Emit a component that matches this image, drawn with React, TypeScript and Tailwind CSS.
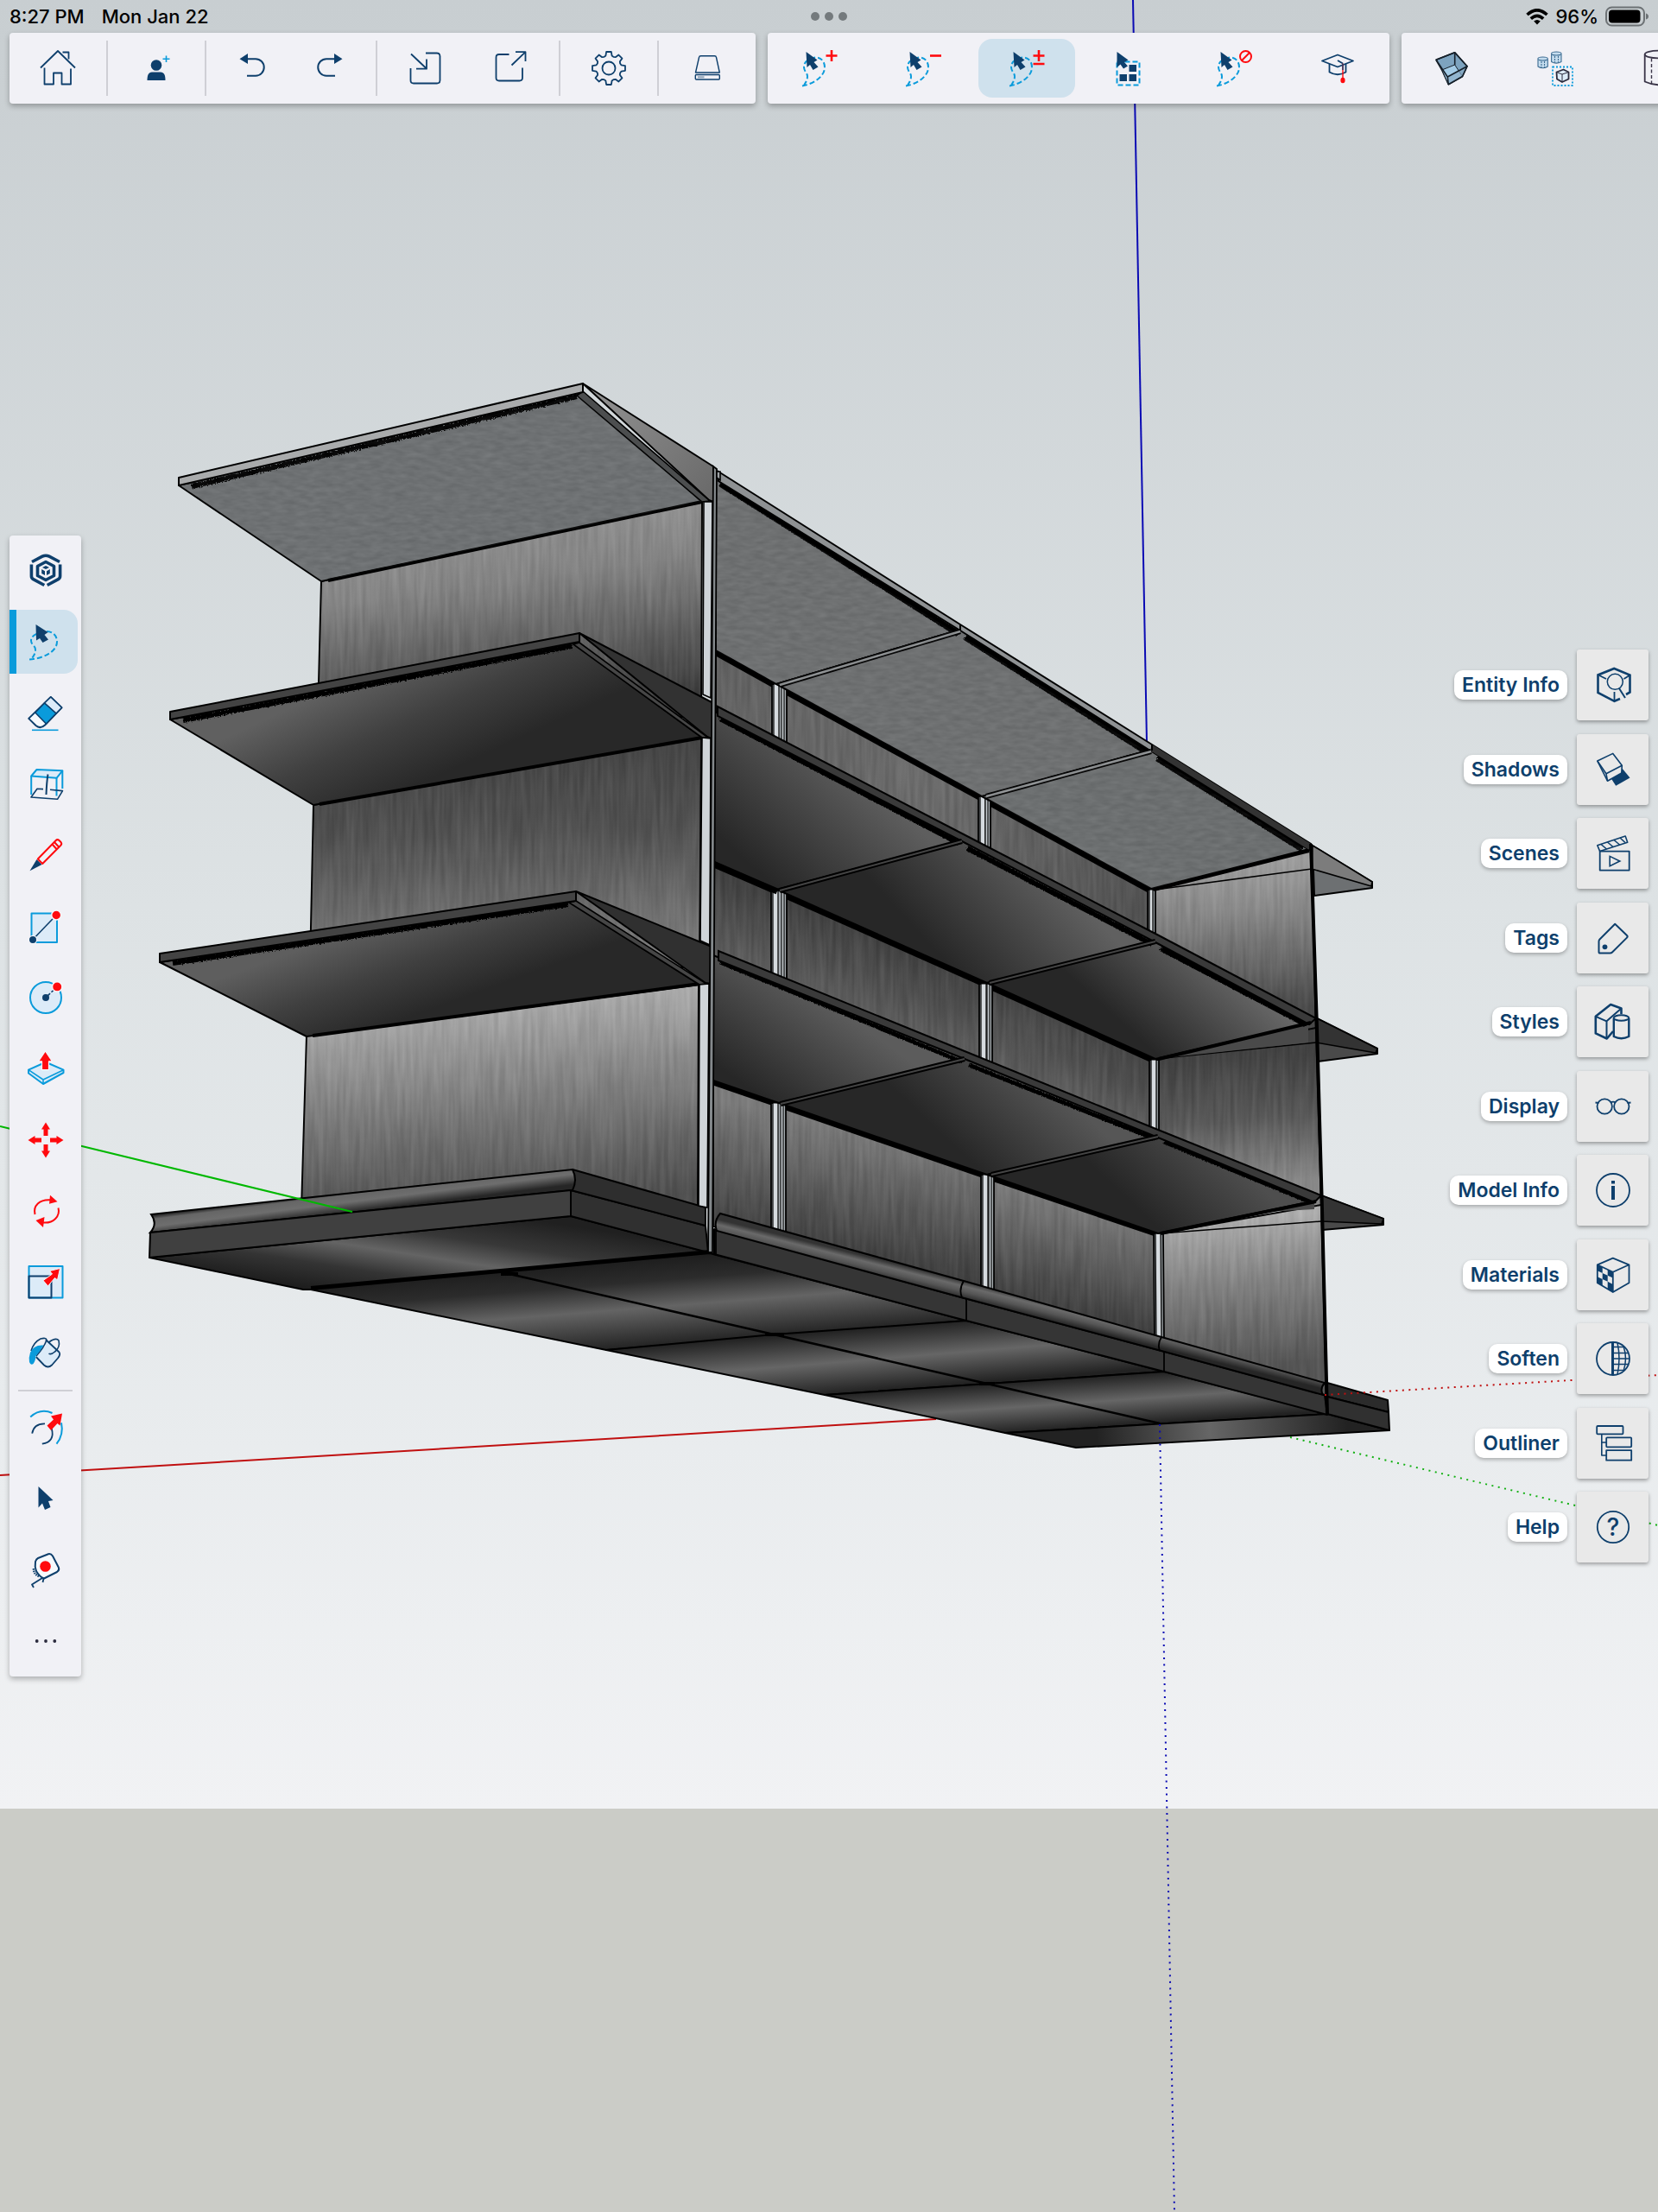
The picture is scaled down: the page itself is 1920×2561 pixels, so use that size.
import type { ReactNode } from "react";

const NAVY = "#0e3f6c";
const BLUE = "#0a9bdb";
const RED = "#ff0a0e";
const PALE = "#dcebf8";

/* ---------- icon helpers ---------- */

function Icon({ children }: { children: ReactNode }) {
  return (
    <svg
      viewBox="0 0 44 44"
      className="size-11 shrink-0 overflow-visible"
      fill="none"
      stroke={NAVY}
      strokeWidth={1.6}
      strokeLinejoin="round"
      strokeLinecap="butt"
      aria-hidden="true"
    >
      {children}
    </svg>
  );
}

/* Narrow loop used by the selection modes in the top bar. */
function LassoLoop() {
  return (
    <>
      <path
        d="M2 42.500 C14 40.500 28 32 28 21 C28 12 21 8 15 10 C8 12 4 15 4 20.500 C4 26 8 27 8 31.500 C8 36 6 38 4 42"
        stroke={BLUE}
        strokeWidth={2}
        strokeDasharray="6 3"
      />
      <path d="M6.500 3 L19.500 12.500 L15.500 15 L20.500 20.500 L14.500 24 L11 18 L7.500 21 Z" fill={NAVY} stroke="none" />
    </>
  );
}

function gearPath() {
  const pts: string[] = [];
  const teeth = 8;
  for (let i = 0; i < teeth; i++) {
    const base = (i / teeth) * Math.PI * 2 - Math.PI / 2;
    const add = (r: number, a: number) =>
      pts.push(`${(22 + r * Math.cos(base + a)).toFixed(2)} ${(22 + r * Math.sin(base + a)).toFixed(2)}`);
    add(15, -0.24);
    add(19.2, -0.15);
    add(19.2, 0.15);
    add(15, 0.24);
    add(14.2, 0.393);
  }
  return `M${pts.join(" L")} Z`;
}

const HomeIcon = () => (
  <Icon>
    <path d="M2 21.500 L22 2 L42 21.500 M27.500 3.500 H34.500 V11.500" strokeWidth={1.8} />
    <path d="M6.500 21.500 V40.500 H17 V27.500 H26.500 V40.500 H37 V22.500" strokeWidth={1.8} />
  </Icon>
);
const UserIcon = () => (
  <Icon>
    <circle cx="22" cy="18.500" r="6.300" fill={NAVY} stroke="none" />
    <path d="M11.500 36 C11.500 30 13 26.500 17 26.500 H27 C31 26.500 32.500 30 32.500 36 Z" fill={NAVY} stroke="none" />
    <path d="M33.500 7.500 V15 M29.500 11.200 H37.500" stroke={BLUE} strokeWidth={1.6} />
  </Icon>
);
const UndoIcon = () => (
  <Icon>
    <path d="M7.500 11.200 L17 5 V17 Z" fill={NAVY} stroke="none" />
    <path d="M16 11.200 H26 A9.700 9.700 0 0 1 26 30.700 H16" strokeWidth={2} />
  </Icon>
);
const RedoIcon = () => (
  <Icon>
    <path d="M36.500 11.200 L27 5 V17 Z" fill={NAVY} stroke="none" />
    <path d="M28 11.200 H18 A9.700 9.700 0 0 0 18 30.700 H28" strokeWidth={2} />
  </Icon>
);
const ImportIcon = () => (
  <Icon>
    <path d="M23 4.500 H36 Q39.500 4.500 39.500 8 V36 Q39.500 39.500 36 39.500 H9 Q5.500 39.500 5.500 36 V22" strokeWidth={1.8} />
    <path d="M6 5.500 L24 22.500 M12 22.700 H24 V11.500" strokeWidth={1.8} />
  </Icon>
);
const ExportIcon = () => (
  <Icon>
    <path d="M19.500 6 H8 Q4.500 6 4.500 9.500 V33 Q4.500 36.500 8 36.500 H31.500 Q35 36.500 35 33 V21.500" strokeWidth={1.8} />
    <path d="M22.500 18.500 L38.500 3.200 M27 3.200 H38.500 V14" strokeWidth={1.8} />
  </Icon>
);
const GearIcon = () => (
  <Icon>
    <path d={gearPath()} strokeWidth={1.8} />
    <circle cx="22" cy="22" r="7.500" strokeWidth={1.8} />
  </Icon>
);
const DriveIcon = () => (
  <Icon>
    <path d="M12.500 9.500 Q12.800 7.800 14.500 7.800 H30.500 Q32.200 7.800 32.500 9.500 L36.300 27 H8.500 Z" strokeWidth={1.4} />
    <rect x="8.300" y="29.500" width="28" height="5.500" rx="1" strokeWidth={1.4} />
    <path d="M11 32.300 H18.500" strokeWidth={2} stroke="#8fa3b8" />
  </Icon>
);

const LassoAddIcon = () => (
  <Icon>
    <LassoLoop />
    <path d="M36 1 V14 M29.500 7.500 H42.500" stroke={RED} strokeWidth={2.600} />
  </Icon>
);
const LassoSubtractIcon = () => (
  <Icon>
    <LassoLoop />
    <path d="M30 7.500 H43" stroke={RED} strokeWidth={2.600} />
  </Icon>
);
const LassoToggleIcon = () => (
  <Icon>
    <LassoLoop />
    <path d="M36 1 V14 M29.500 7.500 H42.500 M29.500 17 H42.500" stroke={RED} strokeWidth={2.600} />
  </Icon>
);
const LassoClearIcon = () => (
  <Icon>
    <LassoLoop />
    <circle cx="35.500" cy="8.500" r="6.500" stroke={RED} strokeWidth={2} />
    <path d="M31 13 L40 4" stroke={RED} strokeWidth={2} />
  </Icon>
);
const SelectGroupIcon = () => (
  <Icon>
    <rect x="6.500" y="14.500" width="26" height="27" stroke={BLUE} strokeWidth={2} strokeDasharray="6 3" />
    <path d="M20.500 18 H29 V26 H20.500 Z M9.500 29 H18 V37 H9.500 Z M20.500 29 H29 V37 H20.500 Z" fill={NAVY} stroke="none" />
    <path d="M6.500 3 L19.500 12.500 L15 15 L19 19.500 L14 22.500 L10.500 17.500 L6.500 21 Z" fill={NAVY} stroke="none" />
  </Icon>
);
const LearnIcon = () => (
  <Icon>
    <path d="M22 6.500 L40 13.500 L22 20.500 L4 13.500 Z M22 13 L28 16.500" strokeWidth={1.8} />
    <path d="M12.500 17 V26.500 Q22 32 31.500 26.500 V17" strokeWidth={1.8} />
    <path d="M28 16.500 V33" stroke={RED} strokeWidth={1.4} />
    <path d="M28 16.500 V24" strokeWidth={1.4} />
    <ellipse cx="28" cy="36" rx="2.600" ry="3.200" fill={RED} stroke="none" />
  </Icon>
);
const OpenBoxIcon = () => (
  <Icon>
    <g stroke="#16202a">
      <path d="M4 12.300 L25.700 3.700 L40 19.700 L34.500 31.500 L18.300 40.700 L10.700 24 Z" fill="#7da3bf" />
      <path d="M10.700 24 L25.700 18 L34.500 31.500 L18.300 40.700 Z" fill="#a3cbe6" strokeWidth={1} />
      <path d="M17.300 32 L40 19.700 L34.500 31.500 L18.300 40.700 Z" fill="#8aacc6" fillOpacity="0.700" />
      <path d="M4 12.300 L17.300 32 M25.700 18 V3.700 M4 12.300 L25.700 3.700 L40 19.700" />
    </g>
  </Icon>
);
const ComponentsIcon = () => (
  <Icon>
    <g strokeWidth={1.1} stroke="#3d6c92" fill="#c4dcee">
      <path d="M2 11.500 V20 Q7.500 23.500 13.300 20 V11.500" />
      <ellipse cx="7.600" cy="11" rx="5.700" ry="2" />
      <path d="M17.600 5.500 V14.500 Q23.200 17.800 29 14.500 V5.500" />
      <ellipse cx="23.300" cy="5" rx="5.700" ry="2" />
      <path d="M6 14 V21 M9.500 14 V21 M21.500 8 V15.500 M25.500 8 V15.500" strokeDasharray="2 1" />
    </g>
    <rect x="19" y="20.500" width="23" height="21.500" stroke={BLUE} strokeWidth={1.8} strokeDasharray="2 2" />
    <path d="M23.500 26.500 L31.500 23.500 L37.500 26.500 V34.500 L30 38 L24 34.500 Z" fill={PALE} stroke="#2b2b3d" strokeWidth={1.8} />
    <path d="M23.500 26.500 L30 29 L37.500 26.500 M30 29 V38" stroke="#2b2b3d" strokeWidth={1} />
  </Icon>
);
const CylinderIcon = () => (
  <Icon>
    <g stroke="#3a3548" strokeWidth={1.8}>
      <ellipse cx="22" cy="6" rx="16.300" ry="4.300" />
      <path d="M5.700 6 V37.500 Q22 45 38.300 37.500 V6" />
      <path d="M13.500 10.500 V40" strokeDasharray="4 2.500" strokeWidth={1.4} />
    </g>
  </Icon>
);

const ModelerIcon = () => (
  <Icon>
    <g strokeWidth={3.600}>
      <path d="M6 11.500 L18 5.200 Q22 3.200 26 5.200 L38 11.500" />
      <path d="M5.400 14.500 V28 Q5.400 30.500 7.500 31.600 L20.300 38.500" />
      <path d="M38.600 14.500 V28 Q38.600 30.500 36.500 31.600 L23.700 38.500" />
      <path d="M22 11.500 L31.500 16.500 V27.500 L22 32.500 L12.500 27.500 V16.500 Z" />
    </g>
    <path d="M22 16 L26 18 L22 20 L18 18 Z M17.200 20 L21 22.200 V27 L17.200 25 Z M26.800 20 L23 22.200 V27 L26.800 25 Z" fill={NAVY} stroke="none" />
  </Icon>
);
const LassoIcon = () => (
  <Icon>
    <path
      d="M3 42.500 C18 41.500 35 34 35 22 C35 12 26 8.500 19 10.500 C11 12.500 5 15 5 20.500 C5 26 10 26 10 31.500 C10 36 8 38 5.500 42"
      stroke={BLUE}
      strokeWidth={2}
      strokeDasharray="6 3"
    />
    <path d="M10.500 2 L24.500 11 L20.500 14 L25 19.500 L18.500 23 L15 18 L11 20.500 Z" fill={NAVY} stroke="none" />
  </Icon>
);
const EraserIcon = () => (
  <Icon>
    <path d="M2.200 27.900 L27.800 3 L40.500 15.300 L21 35.500 Q15.500 40.500 10.500 36 Z" fill="#f6f9fd" strokeWidth={2} />
    <path d="M27.800 3 L40.500 15.300 L34 22 L20.500 10 Z" fill={PALE} />
    <path d="M20.500 10 L34 22 L22.500 34 L9.800 21 Z" fill={BLUE} />
    <path d="M6 41.300 H36.500" stroke={BLUE} strokeWidth={1.6} />
  </Icon>
);
const SectionIcon = () => (
  <Icon>
    <path d="M5.200 12.500 L11.500 5 L41.300 6.300 L34.500 14.800 Z" fill={PALE} stroke={BLUE} strokeWidth={2} />
    <path d="M5.200 12.500 V34 M34.500 14.800 V35.500 M41.300 6.300 V27" stroke={BLUE} strokeWidth={2} />
    <path d="M19 27.600 L12 27.300 L5 37 L35.500 39.300 L41.500 29.600 L27 28.300" />
    <path d="M24.500 10.500 Q23 20 22.500 34" strokeWidth={2} />
  </Icon>
);
const PencilIcon = () => (
  <Icon>
    <path d="M3.500 40.300 L11.500 27 L17.500 33 Z" fill={NAVY} stroke="none" />
    <path d="M12.800 26.500 L33.500 5.200 Q35.500 3.200 37.500 5 L39.700 7.300 Q41 9 39.300 10.800 L18.200 32 Z M29.500 9.500 L34.500 15 M32 7 L37 12.500" stroke={RED} strokeWidth={2} />
  </Icon>
);
const RectangleIcon = () => (
  <Icon>
    <rect x="5.500" y="6.400" width="29.500" height="33.500" fill={PALE} stroke={BLUE} strokeWidth={2} />
    <path d="M6.800 37 L34.200 8.500" />
    <circle cx="7" cy="37" r="4.600" fill={NAVY} stroke="#f6f6fa" strokeWidth={1.2} />
    <circle cx="34.200" cy="8.500" r="5.500" fill={RED} stroke="#f6f6fa" strokeWidth={1.5} />
  </Icon>
);
const CircleIcon = () => (
  <Icon>
    <circle cx="22" cy="22" r="18" fill={PALE} stroke={BLUE} strokeWidth={2} />
    <path d="M22 22 L35 9.500" strokeDasharray="7 2" />
    <circle cx="22" cy="22" r="4" fill={NAVY} stroke="none" />
    <circle cx="35.200" cy="9.400" r="5.700" fill={RED} stroke="#f6f6fa" strokeWidth={1.5} />
  </Icon>
);
const PushPullIcon = () => (
  <Icon>
    <path d="M2 23.700 L18 16.500 H26 L42.500 23.700 V27 L19 40 L2 27.500 Z" fill={PALE} stroke={BLUE} strokeWidth={2} />
    <path d="M2 23.700 L19 35 L42.500 23.700 M19 35 V40" stroke={BLUE} strokeWidth={1.6} />
    <path d="M21.500 2 L29.500 13.800 H25.500 V23.700 H17.500 V13.800 H13.500 Z" fill={RED} stroke="#f6f6fa" strokeWidth={1.2} />
  </Icon>
);
const MoveIcon = () => (
  <Icon>
    <g fill={RED} stroke="none">
      {[0, 90, 180, 270].map((a) => (
        <path key={a} d="M22 1.500 L27 9.500 H24.500 V17 H19.500 V9.500 H17 Z" transform={`rotate(${a} 22 22)`} />
      ))}
    </g>
  </Icon>
);
const RotateIcon = () => (
  <Icon>
    <g stroke={RED} strokeWidth={2}>
      <path d="M9.500 26 C7 16 15 8.500 27 9.300" />
      <path d="M36.500 18.500 C39 28 31 36.500 19 35.500" />
      <path d="M27 3.800 L35.500 11.300 L26 13.800 Z" fill={RED} stroke="none" />
      <path d="M20.500 29 L10.500 33 L19 41 Z" fill={RED} stroke="none" />
    </g>
  </Icon>
);
const ScaleIcon = () => (
  <Icon>
    <rect x="2.500" y="4" width="39" height="36.500" fill={PALE} stroke={BLUE} strokeWidth={2} />
    <path d="M2.500 15.500 H28.500 V40.500 H2.500 Z" strokeWidth={2} />
    <path d="M38.500 6.500 L26.500 9.500 L29.500 13 L19 20.500 L24.500 27 L32.500 17.500 L35.500 20 Z" fill={RED} stroke="#f3f7fc" strokeWidth={1} />
  </Icon>
);
const PaintIcon = () => (
  <Icon>
    <path d="M22 6.500 Q34 14 38 23 Q38 27 33 32 L28 36.500 Q24 40 20 36 L10.500 26 Q14 17 22 15 Z" fill={PALE} stroke="none" />
    <path d="M22 7 L37.500 21.500 Q39.500 24 36 28.500 L29 36.500 Q24.500 40.500 20 36.500 L10.800 27" strokeWidth={1.8} />
    <path d="M5 20 Q8 10 16 6 Q24 4 22.500 8.500 Q20.500 15 11 26" strokeWidth={1.6} />
    <path d="M19.500 13.500 Q8 12.500 4 22 Q2 28 3 33 Q4.500 37 7.500 35 Q10 32 10.500 26 Q15 21 19.500 13.500 Z" fill={BLUE} stroke="none" />
    <path d="M25.500 10 Q34 4 37 8 Q39 16 32.500 21 Q28 25 25.500 23" strokeWidth={1.6} />
  </Icon>
);
const OffsetIcon = () => (
  <Icon>
    <path d="M4.200 9.500 Q16 -1 29.500 5" stroke={BLUE} strokeWidth={2} />
    <path d="M40 16.200 Q43 30 34.500 40.700" stroke={BLUE} strokeWidth={2} />
    <path d="M6.200 28.700 Q8 17 21 17.300 M28.800 23 Q33 38 17.800 40.700" strokeWidth={1.8} />
    <path d="M41 5.500 L28 8.500 L31 12.500 L23.500 19.500 L28 25 L35.500 17 L38.500 19.500 Z" fill={RED} stroke="none" />
  </Icon>
);
const SelectIcon = () => (
  <Icon>
    <path d="M13.500 8 L30.500 24 L25 25 L27.500 32 L21 35 L18 27.500 L13.500 32.500 Z" fill={NAVY} stroke="none" />
  </Icon>
);
const TapeIcon = () => (
  <Icon>
    <path d="M13 8 L25 3.200 Q28 2.500 30 5.500 L37 19 Q38 22 35 24 L20 31.500 Q15 30 11 23 Q9 18 10 12 Q11 9 13 8 Z" fill="#f6f9fd" strokeWidth={2} />
    <circle cx="21.500" cy="17.500" r="6.300" fill={RED} stroke="none" />
    <path d="M18 31 L6 38.500 L8 42 M19.500 31.500 L18.500 36" strokeWidth={1.8} />
    <path d="M8 20 Q7.500 26 14 29" strokeWidth={2.500} strokeDasharray="1.500 1" />
  </Icon>
);
const MoreIcon = () => (
  <Icon>
    <g fill="#2b2b3d" stroke="none">
      <circle cx="11.700" cy="22" r="1.900" />
      <circle cx="22" cy="22" r="1.900" />
      <circle cx="32.300" cy="22" r="1.900" />
    </g>
  </Icon>
);

const EntityIcon = () => (
  <Icon>
    <path d="M30 38 L23.500 40.800 L4.500 31 V10.500 L23.200 3 L41.500 10.500 V30.500 L37 33" strokeWidth={2.600} strokeLinejoin="miter" />
    <path d="M6 11 L14 15 M41 11 L34.500 15 M23.500 30 V40" strokeWidth={1.8} />
    <circle cx="24.300" cy="18.300" r="9" strokeWidth={1.5} />
    <path d="M29 26 L36 37" strokeWidth={2} />
  </Icon>
);
const ShadowsIcon = () => (
  <Icon>
    <path d="M20.200 33 L32 20 L41.500 31.600 L25.200 40.800 Z" fill={NAVY} stroke="none" />
    <path d="M3.800 12 L21.800 3.400 L32.300 17.200 L31.800 26 L15.500 35.200 Z" fill="#e9e9e9" />
    <path d="M3.800 12 L14 26.800 L32.300 17.200 M14 26.800 L15.500 35.200" />
  </Icon>
);
const ScenesIcon = () => (
  <Icon>
    <rect x="6.700" y="19.600" width="34" height="22" strokeWidth={1.8} />
    <path d="M3.800 12.700 L36.200 2 L38.700 9.300 L6.700 19.600 Z" strokeWidth={1.6} />
    <path d="M8 11.500 L14.500 17 M15.500 9 L22 14.500 M23 6.500 L29.500 12 M30 4 L36 9.500" strokeWidth={1.6} />
    <path d="M18.200 25.400 L29.800 31 L18.200 36.800 Z" strokeWidth={1.6} strokeLinejoin="miter" />
  </Icon>
);
const TagsIcon = () => (
  <Icon>
    <path d="M24.200 5.800 L38 19 Q39.300 20.300 38 21.600 L21 38.500 Q20 39.600 18.500 39.600 H7 Q5.500 39.600 5.500 38 V26 Q5.500 24.500 6.500 23.500 Z" strokeWidth={2} />
    <circle cx="12.500" cy="32.300" r="2.900" fill={NAVY} stroke="none" />
  </Icon>
);
const StylesIcon = () => (
  <Icon>
    <path d="M31.500 13 V6.500 L19.200 2 L1.800 15.800 V35.400 L14.800 41.500 L22 33" strokeWidth={2.600} />
    <path d="M1.800 15.800 L14.500 21.300 L31.500 6.500 M14.500 21.300 V41" strokeWidth={2} />
    <path d="M22.800 18 V39 Q31.500 43.500 40.300 39 V18" strokeWidth={2.400} fill="#e9e9e9" />
    <ellipse cx="31.500" cy="17.500" rx="8.800" ry="3.200" strokeWidth={2} fill="#e9e9e9" />
  </Icon>
);
const DisplayIcon = () => (
  <Icon>
    <circle cx="12.200" cy="22" r="8.700" strokeWidth={1.8} />
    <circle cx="31.800" cy="22" r="8.700" strokeWidth={1.8} />
    <path d="M1.500 17.500 L5.500 18 M42.500 17.500 L38.500 18 M19 17.500 Q22 15.800 25 17.500" strokeWidth={1.8} />
  </Icon>
);
const InfoIcon = () => (
  <Icon>
    <circle cx="22" cy="22" r="19" strokeWidth={1.8} />
    <path d="M22 17 V33 M22 11 V14.500" strokeWidth={4} />
  </Icon>
);
const MaterialsIcon = () => (
  <Icon>
    <path
      d="M3.800 10.500 L9.700 13.200 V20 L3.800 17.300 Z M9.700 20 L15.700 22.700 V29.700 L9.700 27 Z M15.700 15.800 L21.800 18.700 V25.500 L15.700 22.700 Z M3.800 24.200 L9.700 27 V34.500 L3.800 31.200 Z M15.700 29.700 L21.800 33 V42 L15.700 38.500 Z"
      fill={NAVY}
      stroke="none"
    />
    <path d="M21.800 2.600 L40.500 10.300 V31.200 L21.800 42 L3.800 31.200 V10.300 Z M3.800 10.300 L21.800 18.700 L40.500 10.300 M21.800 18.700 V42" strokeWidth={1.8} />
  </Icon>
);
const SoftenIcon = () => (
  <Icon>
    <circle cx="22" cy="22" r="19" strokeWidth={1.8} />
    <path d="M21.500 3 V41" strokeWidth={3} />
    <path d="M22 8.500 H35 M22 15.500 H40 M22 22 H41 M22 28.500 H40 M22 35.500 H35 M27 3.500 Q31 22 27 40.500 M34 7.500 Q39 22 34 36.500" strokeWidth={1.5} />
  </Icon>
);
const OutlinerIcon = () => (
  <Icon>
    <path d="M8.800 11.300 V36 H14 M8.800 21 H14" strokeWidth={1.6} />
    <rect x="3.200" y="2" width="30.300" height="9.300" rx="1" strokeWidth={1.8} />
    <rect x="14.200" y="15.300" width="29" height="11" rx="1" strokeWidth={1.8} />
    <rect x="14.200" y="30.200" width="29" height="11.500" strokeWidth={1.8} />
  </Icon>
);
const HelpIcon = () => (
  <Icon>
    <circle cx="22" cy="22" r="18.200" strokeWidth={1.8} />
    <text x="22" y="32" textAnchor="middle" fontSize="28" fontWeight="500" fill={NAVY} stroke="none" fontFamily="Inter, sans-serif">
      ?
    </text>
  </Icon>
);

/* ---------- 3D model ---------- */

type Pts = string;

function Face({ p, fill, w = 2 }: { p: Pts; fill: string; w?: number }) {
  return <polygon points={p} fill={fill} stroke="#000" strokeWidth={w} strokeLinejoin="round" />;
}

function Grad({ id, v, stops }: { id: string; v: [number, number, number, number]; stops: [number, string][] }) {
  return (
    <linearGradient id={id} gradientUnits="userSpaceOnUse" x1={v[0]} y1={v[1]} x2={v[2]} y2={v[3]}>
      {stops.map(([o, c]) => (
        <stop key={o} offset={o} stopColor={c} />
      ))}
    </linearGradient>
  );
}

const LEFT_PANELS: Pts[] = [
  "372,673 813,581 812,830 368,830",
  "363,932 812,854 810,1120 359,1120",
  "355,1199 809,1139 808,1400 349,1400",
];
const RIGHT_WALLS: Pts[] = [
  "1338,1030 1519,983 1524,1200 1338,1090",
  "1338,1226 1524,1190 1530,1400 1338,1320",
  "1344,1428 1530,1395 1536,1625 1346,1560",
];
const BACK_PANELS: Pts[] = [
  "829,753 899,792 1137,922 1333,1029 1333,1090 829,830",
  "826,998 900,1030 1143,1138 1338,1226 1338,1320 826,1110",
  "826,1251 902,1277 1143,1360 1341,1427 1345,1560 826,1420",
];

/* Vertical standard: a pale face, then a narrower return where it is wide enough. */
function Post({ x, top, bottom, w, dx = 0 }: { x: number; top: number; bottom: number; w: number; dx?: number }) {
  const wide = w > 13;
  const strip = (a: number, b: number) => `${x + a},${top} ${x + b},${top} ${x + b + dx},${bottom} ${x + a + dx},${bottom}`;
  return (
    <g>
      <Face p={strip(0, w)} fill={wide ? "#a4aaae" : "#8d9396"} w={1.8} />
      <Face p={strip(2, wide ? 8 : w - 3)} fill="#d6dbdf" w={1.2} />
      {wide && <Face p={strip(w - 6, w - 3)} fill="#c3c9cd" w={1.1} />}
    </g>
  );
}

function SideShelf({
  underside,
  edge,
  end,
  lip,
  shadow,
  fill,
  edgeFill,
  endFill,
  lipFill,
  back,
}: Record<"underside" | "edge" | "end" | "lip" | "shadow" | "fill" | "edgeFill" | "endFill" | "lipFill" | "back", string>) {
  return (
    <g>
      <Face p={underside} fill={fill} />
      <path d={shadow} stroke="#000" strokeWidth={6} filter="url(#rough)" fill="none" />
      <path d={back} stroke="#000" strokeWidth={4} fill="none" />
      <Face p={end} fill={endFill} />
      <Face p={lip} fill={lipFill} w={1.6} />
      <Face p={edge} fill={edgeFill} />
    </g>
  );
}

function Model() {
  return (
    <svg
      viewBox="0 0 1920 2561"
      preserveAspectRatio="xMidYMid slice"
      className="absolute inset-0 size-full"
      role="img"
      aria-label="Steel shelving unit with drawing axes"
    >
      <defs>
        <Grad id="sky" v={[0, 0, 0, 2094]} stops={[[0, "#c8ced1"], [0.5, "#dde2e4"], [0.8, "#e9ecee"], [1, "#f1f2f4"]]} />
        <Grad id="p1" v={[580, 620, 610, 830]} stops={[[0, "#929292"], [0.25, "#868686"], [1, "#3c3c3c"]]} />
        <Grad id="p2" v={[590, 880, 600, 1090]} stops={[[0, "#454545"], [0.4, "#515151"], [1, "#787878"]]} />
        <Grad id="p3" v={[580, 1160, 600, 1400]} stops={[[0, "#b0b0b0"], [0.35, "#8c8c8c"], [1, "#4c4c4c"]]} />
        <Grad id="shelfB" v={[400, 790, 460, 920]} stops={[[0, "#606060"], [0.5, "#404040"], [1, "#282828"]]} />
        <Grad id="shelfC" v={[400, 1080, 440, 1190]} stops={[[0, "#5e5e5e"], [0.5, "#404040"], [1, "#282828"]]} />
        <Grad id="bayB1" v={[1010, 910, 900, 1030]} stops={[[0, "#5e5e5e"], [1, "#272727"]]} />
        <Grad id="bayB2" v={[1230, 1020, 1110, 1130]} stops={[[0, "#606060"], [1, "#272727"]]} />
        <Grad id="bayB3" v={[1440, 1130, 1350, 1230]} stops={[[0, "#686868"], [1, "#272727"]]} />
        <Grad id="bayC1" v={[960, 1160, 880, 1270]} stops={[[0, "#5c5c5c"], [1, "#272727"]]} />
        <Grad id="bayC2" v={[1230, 1265, 1140, 1360]} stops={[[0, "#565656"], [1, "#272727"]]} />
        <Grad id="bayC3" v={[1430, 1345, 1350, 1430]} stops={[[0, "#4e4e4e"], [1, "#262626"]]} />
        <Grad id="w1" v={[1430, 1000, 1440, 1170]} stops={[[0, "#a2a2a2"], [0.4, "#848484"], [1, "#484848"]]} />
        <Grad id="w2" v={[1430, 1220, 1440, 1370]} stops={[[0, "#3f3f3f"], [0.5, "#585858"], [1, "#8a8a8a"]]} />
        <Grad id="w3" v={[1430, 1410, 1440, 1580]} stops={[[0, "#b2b2b2"], [0.4, "#888"], [1, "#555"]]} />
        <Grad id="b1" v={[830, 780, 1330, 1060]} stops={[[0, "#626262"], [0.5, "#6c6c6c"], [1, "#525252"]]} />
        <Grad id="b2" v={[1000, 1060, 960, 1160]} stops={[[0, "#3a3a3a"], [1, "#5e5e5e"]]} />
        <Grad id="b3" v={[1010, 1310, 980, 1460]} stops={[[0, "#7c7c7c"], [0.5, "#5c5c5c"], [1, "#3a3a3a"]]} />
        <Grad id="b3b" v={[1240, 1390, 1210, 1520]} stops={[[0, "#7c7c7c"], [0.5, "#5c5c5c"], [1, "#3a3a3a"]]} />
        <Grad id="end1" v={[690, 460, 820, 580]} stops={[[0, "#8f8f8f"], [1, "#6a6a6a"]]} />
        <Grad id="mouldL" v={[400, 1380, 403, 1404]} stops={[[0, "#303030"], [0.15, "#666"], [0.5, "#6e6e6e"], [1, "#262626"]]} />
        <Grad id="mouldR" v={[1105, 1480, 1100, 1500]} stops={[[0, "#333"], [0.3, "#6a6a6a"], [0.6, "#555"], [1, "#262626"]]} />
        <Grad id="baseL" v={[499, 1394, 481, 1510]} stops={[[0, "#202020"], [0.3, "#383838"], [0.52, "#646464"], [0.75, "#343434"], [1, "#1e1e1e"]]} />
        <Grad id="s1" v={[700, 1462, 708, 1563]} stops={[[0, "#1e1e1e"], [0.25, "#2c2c2c"], [0.55, "#646464"], [1, "#222"]]} />
        <Grad id="s2" v={[1000, 1538, 1006, 1611]} stops={[[0, "#222"], [0.5, "#666"], [1, "#222"]]} />
        <Grad id="s3" v={[1250, 1595, 1254, 1653]} stops={[[0, "#222"], [0.5, "#666"], [1, "#222"]]} />
        <Grad id="s4" v={[1270, 1665, 1560, 1645]} stops={[[0, "#222"], [0.45, "#666"], [1, "#222"]]} />
        <filter id="rough" x="-5%" y="-5%" width="110%" height="110%">
          <feTurbulence type="fractalNoise" baseFrequency="0.6" numOctaves="2" result="n" />
          <feDisplacementMap in="SourceGraphic" in2="n" scale="4" />
        </filter>
        <filter id="brush" x="0" y="0" width="100%" height="100%" colorInterpolationFilters="sRGB">
          <feTurbulence type="fractalNoise" baseFrequency="0.2 0.014" numOctaves="2" seed="4" />
          <feColorMatrix values="1.400 0 0 0 -0.300 1.400 0 0 0 -0.300 1.400 0 0 0 -0.300 0 0 0 0 1" />
        </filter>
        <filter id="grain" x="0" y="0" width="100%" height="100%" colorInterpolationFilters="sRGB">
          <feTurbulence type="fractalNoise" baseFrequency="0.07 0.2" numOctaves="2" seed="7" />
          <feColorMatrix values="1.200 0 0 0 -0.150 1.200 0 0 0 -0.150 1.200 0 0 0 -0.150 0 0 0 0 1" />
        </filter>
        <clipPath id="verticals">
          {[...LEFT_PANELS, ...RIGHT_WALLS, ...BACK_PANELS].map((p) => (
            <polygon key={p} points={p} />
          ))}
        </clipPath>
        <clipPath id="tops">
          <polygon points="207,562 668,458 813,581 372,673" />
          <polygon points="829,560 1510,983 1333,1029 829,753" />
        </clipPath>
      </defs>

      <rect width="1920" height="2094" fill="url(#sky)" />
      <rect y="2094" width="1920" height="467" fill="#cbccc7" />

      {/* axes behind the unit */}
      <path d="M1312 0 L1328 860" stroke="#0b0bb4" strokeWidth={2} />
      <path d="M0 1708 L1084 1643" stroke="#c01010" strokeWidth={2} />
      <path d="M1494 1664 L1920 1766" stroke="#12b012" strokeWidth={2} strokeDasharray="2 5.500" />

      {/* end brackets on the far side */}
      <Face p="1520,979 1589,1021 1589,1028 1522,1037" fill="#6d7072" />
      <Face p="1520,979 1589,1021 1588,1026 1519,1006" fill="#7c7c7c" w={1.6} />
      <Face p="1525,1179 1595,1214 1595,1220 1526,1229" fill="#4a4a4a" />
      <Face p="1525,1179 1595,1214 1593,1219 1524,1207" fill="#333" w={1.6} />
      <Face p="1530,1384 1602,1411 1602,1418 1531,1424" fill="#4a4a4a" />
      <Face p="1530,1384 1602,1411 1600,1417 1530,1414" fill="#333" w={1.6} />

      {/* end walls of the left side */}
      <Face p={LEFT_PANELS[0]} fill="url(#p1)" />
      <Face p={LEFT_PANELS[1]} fill="url(#p2)" />
      <Face p={LEFT_PANELS[2]} fill="url(#p3)" />

      {/* end walls on the right */}
      <Face p={RIGHT_WALLS[0]} fill="url(#w1)" />
      <Face p={RIGHT_WALLS[1]} fill="url(#w2)" />
      <Face p={RIGHT_WALLS[2]} fill="url(#w3)" />

      {/* back panels */}
      <Face p={BACK_PANELS[0]} fill="url(#b1)" />
      <Face p={BACK_PANELS[1]} fill="url(#b2)" />
      <Face p="826,1251 902,1277 1143,1360 1143,1500 826,1420" fill="url(#b3)" />
      <polygon points="1143,1360 1341,1427 1345,1560 1143,1500" fill="url(#b3b)" />

      <rect x="340" y="570" width="1210" height="1070" filter="url(#brush)" clipPath="url(#verticals)" opacity="0.080" />

      <path d="M1338 1030 L1519 1006 M1338 1226 L1524 1207 M1344 1428 L1530 1414" stroke="#000" strokeWidth={1.6} />
      <path d="M1338 1226 L1515 1183 V1207 Z M1344 1428 L1450 1404 L1522 1400 V1389 Z" fill="#4a4a4a" />

      <path d="M829 755 L899 794 L1137 924 L1333 1031" stroke="#000" strokeWidth={8} fill="none" />
      <path d="M826 1000 L900 1032 L1143 1140 L1338 1228" stroke="#000" strokeWidth={8} fill="none" />
      <path d="M826 1253 L902 1279 L1143 1362 L1341 1429" stroke="#000" strokeWidth={7} fill="none" />

      <Post x={894} top={792} bottom={880} w={17} />
      <Post x={1133} top={922} bottom={990} w={14} />
      <Post x={1329} top={1030} bottom={1085} w={9} />
      <Post x={893} top={1031} bottom={1140} w={18} />
      <Post x={1134} top={1139} bottom={1236} w={15} />
      <Post x={1331} top={1227} bottom={1312} w={11} />
      <Post x={893} top={1277} bottom={1430} w={17} />
      <Post x={1136} top={1360} bottom={1494} w={15} />
      <Post x={1336} top={1428} bottom={1552} w={11} dx={1} />

      {/* top run of shelves */}
      <Face p="829,552 1112,729 899,792 829,753" fill="#6e7072" />
      <Face p="1112,729 1333,868 1137,922 899,792" fill="#6e7072" />
      <Face p="1333,868 1516,983 1333,1029 1137,922" fill="#6c6f70" />
      <path d="M834 560 L1110 734 M1118 738 L1330 872 M1340 878 L1508 983" stroke="#000" strokeWidth={7} filter="url(#rough)" />
      <path d="M832 546 L1112 723 L1334 862 L1518 977 L1516 984 L1332 869 L1112 730 L832 557 Z" fill="#8e9193" stroke="#000" strokeWidth={2} />
      <path d="M1334 862 L1518 977 L1516 984 L1332 869 Z" fill="#333" />
      <path d="M1112 723 V730 M1334 862 V869" stroke="#000" strokeWidth={2} />
      <path d="M1112 731 L903 793 M1333 870 L1142 922" stroke="#000" strokeWidth={6} />
      <path d="M1112 731 L903 793 M1333 870 L1142 922" stroke="#8f9294" strokeWidth={2.500} />
      <path d="M1516 985 L1336 1030" stroke="#000" strokeWidth={4} />

      {/* middle run of shelves */}
      <Face p="826,823 1114,973 900,1030 826,998" fill="url(#bayB1)" />
      <Face p="1114,973 1338,1089 1143,1138 900,1030" fill="url(#bayB2)" />
      <Face p="1338,1089 1518,1184 1338,1226 1143,1138" fill="url(#bayB3)" />
      <path d="M834 832 L1110 976 M1120 982 L1334 1093 M1344 1098 L1512 1186" stroke="#000" strokeWidth={6} filter="url(#rough)" />
      <path d="M831 818 L1114 965 L1338 1081 L1524 1179 L1516 1186 L1338 1091 L1114 974 L831 829 Z" fill="#3a3a3a" stroke="#000" strokeWidth={2} />
      <path d="M1114 974 L903 1031 M1338 1090 L1146 1138" stroke="#000" strokeWidth={6} />
      <path d="M1114 974 L903 1031 M1338 1090 L1146 1138" stroke="#444" strokeWidth={2} />
      <path d="M1518 1184 L1342 1226" stroke="#000" strokeWidth={4} />
      <path d="M826 1000 L900 1032" stroke="#000" strokeWidth={7} />

      {/* lower run of shelves */}
      <Face p="826,1106 1117,1225 902,1277 826,1251" fill="url(#bayC1)" />
      <Face p="1117,1225 1341,1315 1143,1360 902,1277" fill="url(#bayC2)" />
      <Face p="1341,1315 1524,1390 1341,1428 1143,1360" fill="url(#bayC3)" />
      <path d="M834 1114 L1113 1229 M1122 1233 L1336 1318 M1348 1322 L1518 1392" stroke="#000" strokeWidth={5} filter="url(#rough)" />
      <path d="M832 1101 L1117 1217 L1341 1308 L1530 1384 L1522 1392 L1341 1317 L1117 1226 L832 1112 Z" fill="#3a3a3a" stroke="#000" strokeWidth={2} />
      <path d="M1117 1226 L904 1278 M1341 1316 L1148 1360" stroke="#000" strokeWidth={6} />
      <path d="M1117 1226 L904 1278 M1341 1316 L1148 1360" stroke="#444" strokeWidth={2} />
      <path d="M1524 1391 L1344 1428" stroke="#000" strokeWidth={4} />

      {/* side shelves on the left */}
      <SideShelf
        underside="207,562 668,455 813,581 372,673"
        fill="#6e7274"
        shadow="M222 563 L668 459"
        back="M380 672 L813 581"
        end="675,444 826,540 826,581 821,579"
        endFill="url(#end1)"
        lip="675,453 822,580 813,581 668,458"
        lipFill="#4c4e4f"
        edge="207,553 675,444 675,454 207,562"
        edgeFill="#a9abac"
      />
      <SideShelf
        underside="197,833 664,745 813,854 363,932"
        fill="url(#shelfB)"
        shadow="M212 834 L662 748"
        back="M370 931 L813 854"
        end="671,733 826,814 826,856 819,853"
        endFill="#323232"
        lip="671,744 820,854 813,854 664,746"
        lipFill="#464646"
        edge="197,824 671,733 671,743 197,833"
        edgeFill="#434343"
      />
      <SideShelf
        underside="185,1114 659,1044 810,1140 355,1200"
        fill="url(#shelfC)"
        shadow="M200 1115 L658 1047"
        back="M362 1199 L810 1139"
        end="667,1032 824,1096 824,1139 817,1138"
        endFill="#303030"
        lip="667,1043 818,1139 810,1140 659,1045"
        lipFill="#464646"
        edge="185,1104 667,1032 667,1043 185,1114"
        edgeFill="#434343"
      />

      <rect x="200" y="450" width="1320" height="590" filter="url(#grain)" clipPath="url(#tops)" opacity="0.070" />

      {/* base, left side */}
      <Face p="173,1456 661,1408 820,1450 360,1493 351,1493" fill="url(#baseL)" />
      <Face p="661,1378 817,1419 820,1450 661,1408" fill="#303030" />
      <Face p="663,1354 817,1398 817,1419 661,1378" fill="#2e2e2e" />
      <path d="M175 1406 L663 1354 Q669 1366 663 1378 L174 1427 Q183 1417 175 1406 Z" fill="url(#mouldL)" stroke="#000" strokeWidth={2} />
      <Face p="174,1427 661,1378 661,1408 173,1456" fill="#404040" />

      {/* base, underside */}
      <Face p="360,1493 822,1451 1119,1529 702,1563" fill="url(#s1)" />
      <Face p="702,1563 896,1545 1119,1529 1348,1588 955,1615" fill="url(#s2)" />
      <Face p="955,1615 1348,1588 1537,1637 1164,1659" fill="url(#s3)" />
      <Face p="1164,1659 1537,1637 1609,1656 1246,1676" fill="url(#s4)" />
      <path d="M590 1475 L896 1545 L1143 1602 L1343 1648" stroke="#000" strokeWidth={2.500} fill="none" />
      <path d="M360 1491 L822 1449" stroke="#000" strokeWidth={4} />
      <path d="M1134 1602 H1152 M886 1545 H908 M580 1475 H600" stroke="#000" strokeWidth={4} />

      {/* base, front */}
      <Face p="827,1423 1113,1502 1345,1564 1534,1615 1537,1638 1348,1588 1119,1529 827,1452" fill="#353535" />
      <path d="M834 1405 Q826 1414 830 1425 L1113 1502 L1345 1564 L1532 1615 Q1528 1608 1534 1601 L1345 1548 L1116 1483 Z" fill="url(#mouldR)" stroke="#000" strokeWidth={2} />
      <path d="M1116 1483 Q1110 1493 1114 1502 M1345 1548 Q1340 1556 1343 1564 M1119 1504 V1529 M1348 1565 V1588 M829 1424 V1452" stroke="#000" strokeWidth={1.8} fill="none" />
      <Face p="1537,1601 1607,1621 1608,1635 1537,1617" fill="#2b2b2b" />
      <Face p="1537,1617 1608,1635 1609,1656 1537,1637" fill="#303030" />

      {/* right upright */}
      <path d="M1518 977 L1525 1190 L1531 1400 L1537 1638" stroke="#000" strokeWidth={4} fill="none" />

      {/* left upright */}
      <path d="M815 581 L825 581 L823 808 L814 804 Z" fill="#cfd4d8" stroke="#000" strokeWidth={1.6} />
      <path d="M813 854 L823 855 L822 1094 L811 1089 Z" fill="#cfd4d8" stroke="#000" strokeWidth={1.6} />
      <path d="M810 1140 L821 1139 L819 1398 L809 1396 Z" fill="#cfd4d8" stroke="#000" strokeWidth={1.6} />
      <path d="M826 540 L830 543 L825 1450 L820 1450 Z" fill="#84898c" stroke="#000" strokeWidth={1.8} />
      <path d="M830 546 H834 V556 L830 553 Z" fill="#9da1a4" stroke="#000" strokeWidth={1.6} />

      {/* axes drawn over the unit */}
      <path d="M0 1304 L408 1403" stroke="#00b800" strokeWidth={2} />
      <path d="M1534 1615 L1920 1592" stroke="#c01010" strokeWidth={2} strokeDasharray="2 5.500" />
      <path d="M1343 1649 L1360 2561" stroke="#0b0bb4" strokeWidth={2} strokeDasharray="2 5.500" />
    </svg>
  );
}

/* ---------- chrome ---------- */

function ToolButton({ label, className, children }: { label: string; className: string; children: ReactNode }) {
  return (
    <button type="button" aria-label={label} className={`flex items-center justify-center ${className}`}>
      {children}
    </button>
  );
}

function StatusBar() {
  return (
    <div className="grid h-[38px] grid-cols-3 items-center px-[11px] text-[22px] leading-none font-medium text-black">
      <div className="flex gap-5">
        <span>8:27 PM</span>
        <span>Mon Jan 22</span>
      </div>
      <div className="flex justify-center gap-[6px]">
        <span className="size-[10px] rounded-full bg-[#747a7d]" />
        <span className="size-[10px] rounded-full bg-[#747a7d]" />
        <span className="size-[10px] rounded-full bg-[#747a7d]" />
      </div>
      <div className="flex items-center justify-end gap-2">
        <svg viewBox="0 0 26 19" className="h-[19px] w-[26px]" fill="none" stroke="#000" strokeWidth={3.600} aria-hidden="true">
          <path d="M1.500 7 Q13 -3.500 24.500 7" />
          <path d="M5.800 11.600 Q13 5 20.200 11.600" />
          <path d="M13 18.500 L9.200 14.500 Q13 11.500 16.800 14.500 Z" fill="#000" stroke="none" />
        </svg>
        <span>96%</span>
        <svg viewBox="0 0 50 24" className="h-6 w-[50px]" aria-hidden="true">
          <rect x="1" y="1.500" width="44" height="21" rx="6.500" fill="none" stroke="#6d7275" strokeWidth={2} />
          <rect x="4" y="4.500" width="36.500" height="15" rx="4" fill="#000" />
          <path d="M47 8.500 Q50 9.500 50 12 Q50 14.500 47 15.500 Z" fill="#6d7275" />
        </svg>
      </div>
    </div>
  );
}

const PANEL = "rounded-[4px] bg-[#f1f1f6] shadow-[0_3px_6px_rgba(0,0,0,0.28)]";

const LASSO_MODES = [
  { label: "Add to selection", icon: <LassoAddIcon /> },
  { label: "Subtract from selection", icon: <LassoSubtractIcon /> },
  { label: "Add or subtract", icon: <LassoToggleIcon />, active: true },
  { label: "Select all", icon: <SelectGroupIcon /> },
  { label: "Clear selection", icon: <LassoClearIcon /> },
  { label: "Learn", icon: <LearnIcon /> },
];

const TOOLS = [
  { label: "Modeler", icon: <ModelerIcon /> },
  { label: "Lasso", icon: <LassoIcon />, active: true },
  { label: "Eraser", icon: <EraserIcon /> },
  { label: "Section plane", icon: <SectionIcon /> },
  { label: "Line", icon: <PencilIcon /> },
  { label: "Rectangle", icon: <RectangleIcon /> },
  { label: "Circle", icon: <CircleIcon /> },
  { label: "Push/Pull", icon: <PushPullIcon /> },
  { label: "Move", icon: <MoveIcon /> },
  { label: "Rotate", icon: <RotateIcon /> },
  { label: "Scale", icon: <ScaleIcon /> },
  { label: "Paint", icon: <PaintIcon /> },
];
const EXTRA_TOOLS = [
  { label: "Offset", icon: <OffsetIcon /> },
  { label: "Select", icon: <SelectIcon /> },
  { label: "Tape measure", icon: <TapeIcon /> },
  { label: "More tools", icon: <MoreIcon /> },
];

const PANELS = [
  { label: "Entity Info", icon: <EntityIcon /> },
  { label: "Shadows", icon: <ShadowsIcon /> },
  { label: "Scenes", icon: <ScenesIcon /> },
  { label: "Tags", icon: <TagsIcon /> },
  { label: "Styles", icon: <StylesIcon /> },
  { label: "Display", icon: <DisplayIcon /> },
  { label: "Model Info", icon: <InfoIcon /> },
  { label: "Materials", icon: <MaterialsIcon /> },
  { label: "Soften", icon: <SoftenIcon /> },
  { label: "Outliner", icon: <OutlinerIcon /> },
  { label: "Help", icon: <HelpIcon /> },
];

function TopToolbars() {
  return (
    <div className="flex gap-[14px] pl-[11px]">
      <div className={`flex h-[82px] shrink-0 items-center divide-x-2 divide-[#cfcfd5] ${PANEL}`}>
        <ToolButton label="Home" className="h-16 w-[114px]"><HomeIcon /></ToolButton>
        <ToolButton label="Account" className="h-16 w-[114px]"><UserIcon /></ToolButton>
        <div className="flex px-2">
          <ToolButton label="Undo" className="h-16 w-[90px]"><UndoIcon /></ToolButton>
          <ToolButton label="Redo" className="h-16 w-[90px]"><RedoIcon /></ToolButton>
        </div>
        <div className="flex px-[5px]">
          <ToolButton label="Import" className="h-16 w-[100px]"><ImportIcon /></ToolButton>
          <ToolButton label="Export" className="h-16 w-[100px]"><ExportIcon /></ToolButton>
        </div>
        <ToolButton label="Settings" className="h-16 w-[114px]"><GearIcon /></ToolButton>
        <ToolButton label="Storage" className="h-16 w-28"><DriveIcon /></ToolButton>
      </div>
      <div className={`flex h-[82px] shrink-0 items-center gap-2 px-1 ${PANEL}`}>
        {LASSO_MODES.map((m) => (
          <ToolButton
            key={m.label}
            label={m.label}
            className={m.active ? "h-[68px] w-28 rounded-2xl bg-[#cfe1ed]" : "h-[68px] w-28 rounded-2xl"}
          >
            {m.icon}
          </ToolButton>
        ))}
      </div>
      <div className={`-mr-16 flex h-[82px] shrink-0 items-center gap-2 px-[2px] ${PANEL}`}>
        <ToolButton label="Solid tools" className="h-[68px] w-28"><OpenBoxIcon /></ToolButton>
        <ToolButton label="Components" className="h-[68px] w-28"><ComponentsIcon /></ToolButton>
        <ToolButton label="Cylinder" className="h-[68px] w-28"><CylinderIcon /></ToolButton>
      </div>
    </div>
  );
}

function ToolRail() {
  return (
    <nav aria-label="Tools" className={`pointer-events-auto flex min-h-[1321px] w-[83px] flex-col justify-between py-1 ${PANEL}`}>
      {TOOLS.map((t) => (
        <ToolButton
          key={t.label}
          label={t.label}
          className={
            t.active
              ? "mr-1 h-[74px] rounded-r-2xl border-l-8 border-[#0a9bdb] bg-[#cfe1ed] pr-1"
              : "h-[74px]"
          }
        >
          {t.icon}
        </ToolButton>
      ))}
      <hr className="-my-[3px] mx-[10px] border-t-2 border-[#cfcfd5]" />
      {EXTRA_TOOLS.map((t) => (
        <ToolButton key={t.label} label={t.label} className="h-[74px]">
          {t.icon}
        </ToolButton>
      ))}
    </nav>
  );
}

function PanelRail() {
  return (
    <nav aria-label="Panels" className="pointer-events-auto flex min-h-[1057px] flex-col justify-between">
      {PANELS.map((p) => (
        <button key={p.label} type="button" className="flex items-center justify-end gap-[11px]">
          <span className="rounded-[10px] bg-white px-[9px] py-1 text-[23px] leading-[26px] font-semibold text-[#0e3f6c] shadow-[0_2px_4px_rgba(0,0,0,0.28)]">
            {p.label}
          </span>
          <span className="flex h-[82px] w-[83px] items-center justify-center rounded-[3px] bg-[#e9e9e9] shadow-[0_2px_4px_rgba(0,0,0,0.35)]">
            {p.icon}
          </span>
        </button>
      ))}
    </nav>
  );
}

export default function App() {
  return (
    <div className="relative min-h-screen overflow-hidden bg-[#cbccc7] font-['Inter',sans-serif]">
      <Model />
      <header className="relative z-10">
        <StatusBar />
        <TopToolbars />
      </header>
      <main className="pointer-events-none absolute inset-0 flex items-center justify-between px-[11px]">
        <ToolRail />
        <PanelRail />
      </main>
    </div>
  );
}
